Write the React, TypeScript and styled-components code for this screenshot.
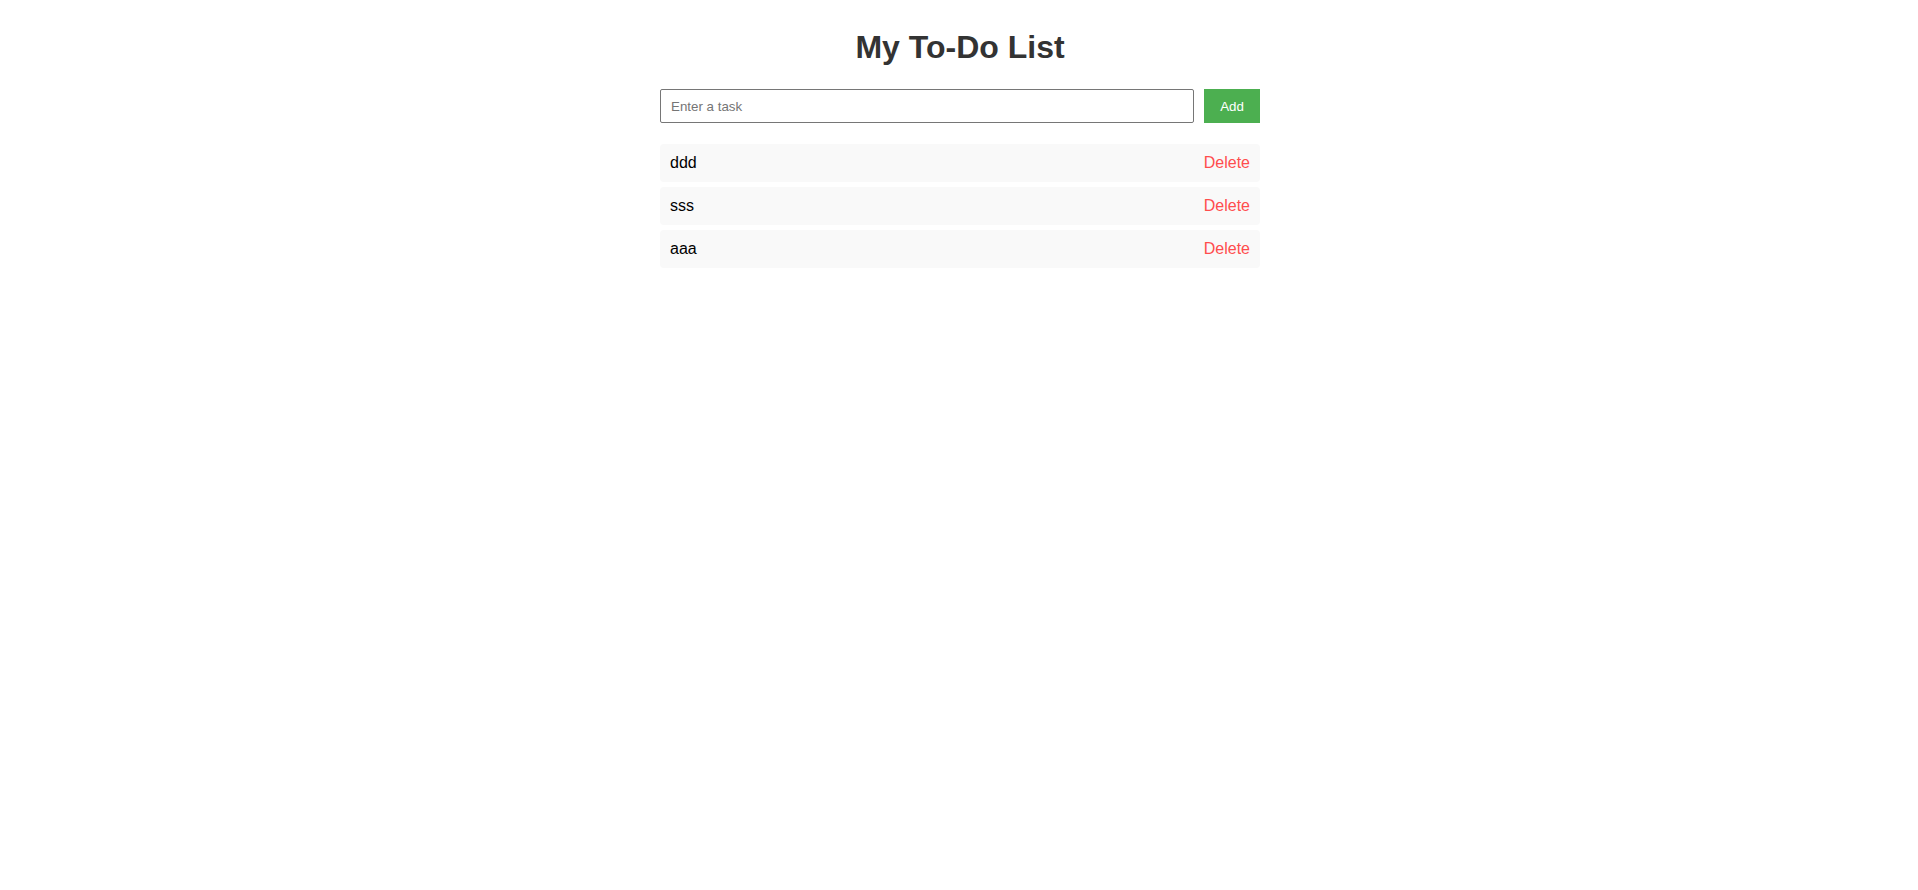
import React, { useState } from "react";
import styled, { createGlobalStyle } from "styled-components";

const GlobalStyle = createGlobalStyle`
  html, body {
    margin: 0;
    padding: 0;
    background: #ffffff;
    font-family: "Liberation Sans", Arial, sans-serif;
  }
`;

const Shell = styled.div`
  padding: 29px 0 0 2px;
`;

const Page = styled.div`
  width: 600px;
  margin: 0 auto;
`;

const Title = styled.h1`
  margin: 0 0 23px;
  font-size: 32px;
  font-weight: bold;
  color: #333333;
  text-align: center;
  line-height: normal;
`;

const Form = styled.form`
  display: flex;
  gap: 10px;
  margin-bottom: 21px;
`;

const TaskInput = styled.input`
  flex: 1;
  height: 34px;
  box-sizing: border-box;
  padding: 8px 10px;
  border: 1px solid #767676;
  border-radius: 2px;
  font-family: "Liberation Sans", Arial, sans-serif;
  font-size: 13.33px;
  color: #000;
  outline: none;
  &::placeholder {
    color: #757575;
  }
`;

const AddButton = styled.button`
  width: 56px;
  height: 34px;
  padding: 0;
  border: none;
  background: #4caf50;
  color: #ffffff;
  font-family: "Liberation Sans", Arial, sans-serif;
  font-size: 13.33px;
  cursor: pointer;
`;

const List = styled.ul`
  list-style: none;
  margin: 0;
  padding: 0;
  display: flex;
  flex-direction: column;
  gap: 5px;
`;

const Item = styled.li`
  display: flex;
  align-items: center;
  justify-content: space-between;
  padding: 10px;
  background: #f9f9f9;
  border-radius: 4px;
  font-size: 16px;
  line-height: 18px;
  color: #000;
`;

const DeleteButton = styled.button`
  background: none;
  border: none;
  padding: 0;
  color: #ff4d4d;
  font-family: "Liberation Sans", Arial, sans-serif;
  font-size: 16px;
  line-height: 18px;
  cursor: pointer;
`;

export default function App() {
  const [tasks, setTasks] = useState<string[]>(["ddd", "sss", "aaa"]);
  const [text, setText] = useState("");

  const add = (e: React.FormEvent) => {
    e.preventDefault();
    if (!text.trim()) return;
    setTasks([text.trim(), ...tasks]);
    setText("");
  };

  return (
    <>
      <GlobalStyle />
      <Shell>
        <Page>
          <Title>My To-Do List</Title>
          <Form onSubmit={add}>
            <TaskInput
              placeholder="Enter a task"
              value={text}
              onChange={(e) => setText(e.target.value)}
            />
            <AddButton type="submit">Add</AddButton>
          </Form>
          <List>
            {tasks.map((t, i) => (
              <Item key={i}>
                <span>{t}</span>
                <DeleteButton onClick={() => setTasks(tasks.filter((_, j) => j !== i))}>
                  Delete
                </DeleteButton>
              </Item>
            ))}
          </List>
        </Page>
      </Shell>
    </>
  );
}
